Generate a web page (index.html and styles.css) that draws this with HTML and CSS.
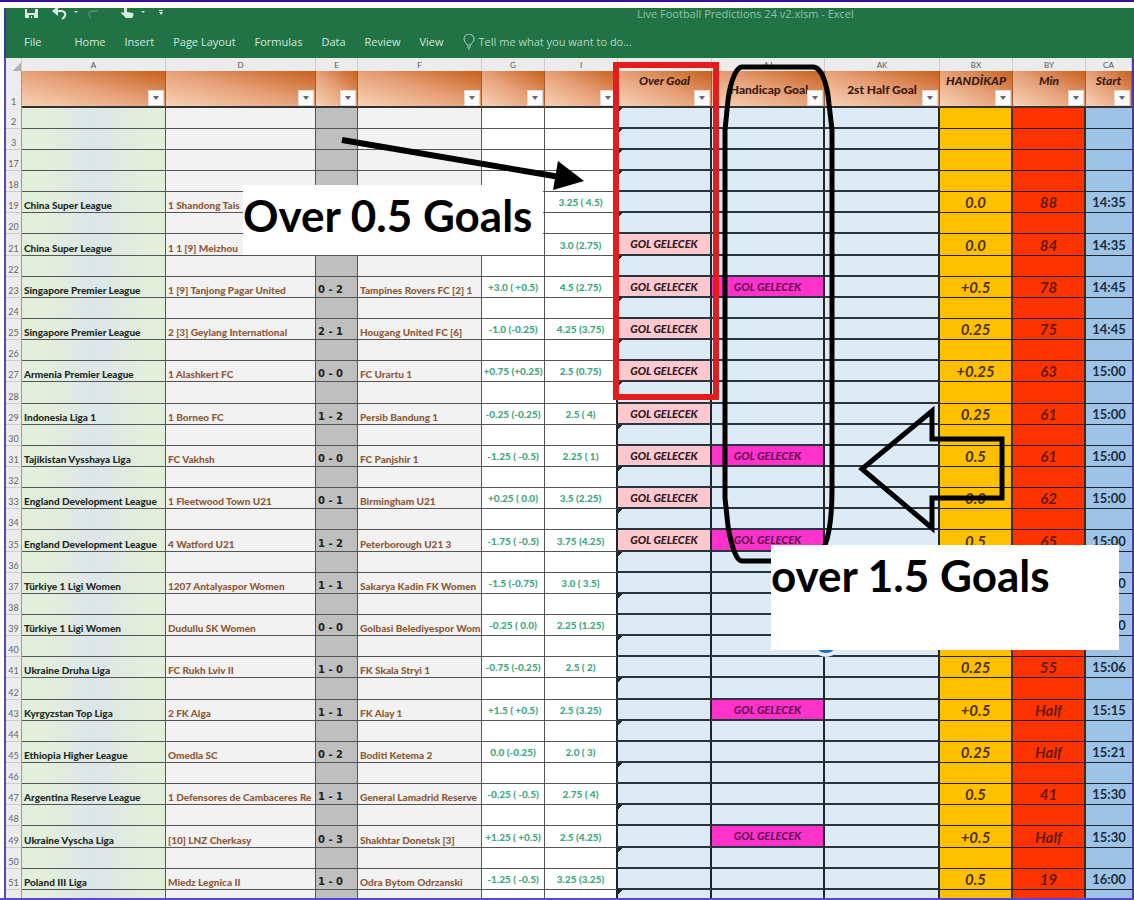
FILE: index.html
```
<!DOCTYPE html>
<html lang="en">

<head>
    <meta charset="UTF-8">
    <meta name="viewport" content="width=device-width, initial-scale=1.0">
    <title>Live Football Predictions</title>
    <link rel="stylesheet" href="styles.css">
</head>

<body>
    <div class="wrap">
        <header class="ribbon">
            <div class="titlebar">
                <svg class="quick" width="150" height="12" viewBox="0 0 150 12" aria-hidden="true">
                    <path class="fill" d="M1 1h2v4h8V1h3v9H1z" />
                    <path class="cut" d="M5 7h5v3H8V8H7v2H5z" />
                    <path class="line" d="M30 3h7c5 0 6 5 1 8" />
                    <path class="fill" d="M28 3l6-5v10z" />
                    <path class="fill" d="M50 3h4l-2 2zM117 3h4l-2 2zM135 2h4v1h-4zM135 4h4l-2 3z" />
                    <path class="line dim" d="M74 3h-5c-5 0-5 4-2 7" />
                    <path class="fill" d="M100 0h3v4l6 1c1 2 0 4-1 5h-6l-5-5 1-1 2 1z" />
                </svg>
                <span class="title">Live Football Predictions 24 v2.xlsm - Excel</span>
            </div>
            <nav class="tabs">
                <button class="file">File</button>
                <button>Home</button>
                <button>Insert</button>
                <button>Page Layout</button>
                <button>Formulas</button>
                <button>Data</button>
                <button>Review</button>
                <button>View</button>
                <button class="tell">
                    <svg width="12" height="16" viewBox="0 0 12 16" aria-hidden="true">
                        <path d="M4 11c0-2-3-3-3-6a5 5 0 0 1 10 0c0 3-3 4-3 6zM4 13h4M5 15h2" />
                    </svg>
                    Tell me what you want to do...
                </button>
            </nav>
        </header>

        <table>
            <colgroup>
                <col class="w-num">
                <col class="w-league">
                <col class="w-home">
                <col class="w-score">
                <col class="w-away">
                <col class="w-line">
                <col class="w-total">
                <col class="w-over">
                <col class="w-hgoal">
                <col class="w-half">
                <col class="w-odds">
                <col class="w-odds">
                <col class="w-start">
            </colgroup>
            <thead>
                <tr class="letters">
                    <td class="corner"></td>
                    <td>A</td>
                    <td>D</td>
                    <td>E</td>
                    <td>F</td>
                    <td>G</td>
                    <td>I</td>
                    <td>AI</td>
                    <td>AJ</td>
                    <td>AK</td>
                    <td>BX</td>
                    <td>BY</td>
                    <td>CA</td>
                </tr>
                <tr class="heads">
                    <td class="num">1</td>
                    <th><button class="filter" aria-label="Filter league"></button></th>
                    <th><button class="filter" aria-label="Filter home"></button></th>
                    <th><button class="filter" aria-label="Filter score"></button></th>
                    <th><button class="filter" aria-label="Filter away"></button></th>
                    <th><button class="filter" aria-label="Filter line"></button></th>
                    <th><button class="filter" aria-label="Filter total"></button></th>
                    <th class="slant">Over Goal<button class="filter" aria-label="Filter over goal"></button></th>
                    <th class="mid">Handicap Goal<button class="filter" aria-label="Filter handicap goal"></button></th>
                    <th class="mid">2st Half Goal<button class="filter" aria-label="Filter half goal"></button></th>
                    <th class="slant">HANDİKAP<button class="filter" aria-label="Filter handicap"></button></th>
                    <th class="slant">Min<button class="filter" aria-label="Filter minute"></button></th>
                    <th class="slant">Start<button class="filter" aria-label="Filter start"></button></th>
                </tr>
            </thead>
            <tbody id="list"></tbody>
        </table>

        <!-- marks drawn over the sheet -->
        <svg class="marks" width="1134" height="900" viewBox="0 0 1134 900" aria-hidden="true">
            <rect class="red" x="616" y="65" width="100" height="332" />
            <path class="black" d="M742 67H813C823 67 828 90 829 104L832 130V488C832 515 829 535 825 545C822 556 818 561 812 561H742C735 561 730 538 728 526L725 498V130L728 100C731 78 737 67 742 67Z" />
            <path class="black" d="M862 469L932 411V439H1002V498H932V528Z" />
            <path class="shaft" d="M342 140L560 177" />
            <path d="M558 161L584 181L553 190Z" />
            <circle class="halo" cx="826" cy="642" r="15" />
            <circle class="dot" cx="826" cy="642" r="11" />
        </svg>
        <div class="note note-one">Over 0.5 Goals</div>
        <div class="note note-two">over 1.5 Goals</div>
    </div>

    <script src="script.js"></script>
</body>

</html>
```
FILE: styles.css
```
* {
    box-sizing: border-box;
}

body {
    margin: 0;
    background: #fff;
    font-family: Lato, "Open Sans", sans-serif;
}

.wrap {
    position: relative;
    height: 100vh;
    overflow: hidden;
    padding: 6px 0 0 4px;
    border-top: 2px solid #3410a8;
    border-bottom: 2px solid #5a48d0;
}

.ribbon {
    height: 50px;
    border-left: 2px solid #3f3594;
    background: #217346;
    font-family: "Open Sans", "Noto Sans", sans-serif;
}

.titlebar {
    display: flex;
    height: 14px;
    padding-left: 18px;
}

.quick {
    flex: none;
}

.quick .fill {
    fill: #dcebe2;
}

.quick .cut {
    fill: #217346;
}

.quick .line {
    fill: none;
    stroke: #dcebe2;
    stroke-width: 2;
}

.quick .dim {
    stroke: #438a62;
}

.title {
    margin-left: 463px;
    font-size: 11px;
    line-height: 12px;
    color: #8fc3a5;
    white-space: nowrap;
}

.tabs {
    display: flex;
    align-items: center;
    gap: 19px;
    height: 40px;
    padding-left: 18px;
}

.tabs button {
    padding: 0;
    border: 0;
    background: none;
    font-family: inherit;
    font-size: 11px;
    line-height: 16px;
    color: #d5e8dc;
    white-space: nowrap;
}

.tabs .file {
    margin-right: 14px;
}

.tabs .tell {
    display: flex;
    align-items: center;
    gap: 4px;
    color: #b4d6c2;
}

.tell svg {
    fill: none;
    stroke: #b4d6c2;
}

/* sheet */
table {
    width: 100%;
    table-layout: fixed;
    border-spacing: 0;
    border-left: 2px solid #5a4aa8;
    border-right: 2px solid #4838a8;
}

.w-num { width: 16px; }
.w-league { width: 144px; }
.w-home { width: 150px; }
.w-score { width: 42px; }
.w-away { width: 124px; }
.w-line { width: 63px; }
.w-total { width: 73px; }
.w-over { width: 94px; }
.w-hgoal { width: 113px; }
.w-half { width: 115px; }
.w-odds { width: 73px; }
.w-start { width: 46px; }

td,
th {
    position: relative;
    padding: 0;
    overflow: hidden;
    white-space: nowrap;
}

.letters td {
    height: 13px;
    border-right: 1px solid #ccc;
    background: #ececec;
    font-size: 8px;
    line-height: 12px;
    text-align: center;
    color: #555;
}

.letters .corner {
    background: linear-gradient(135deg, #ececec 70%, #b0b0b0 70%);
}

.heads th {
    height: 37px;
    padding-top: 2px;
    border-right: 1px solid #a35a2c;
    border-bottom: 2px solid #333;
    background: linear-gradient(to top right, #f8d3b8 0%, #e6a077 50%, #c9601c 100%);
    font-size: 12px;
    font-weight: 900;
    line-height: 16px;
    vertical-align: top;
    color: #3a1a10;
}

.heads .slant {
    font-style: italic;
}

.heads .mid {
    padding: 11px 8px 0;
}

/* the label is wider than its cell once the button is placed */
.heads .mid:nth-child(9) {
    padding: 11px 0 0 2px;
}

.filter {
    position: absolute;
    right: 1px;
    bottom: 0;
    width: 16px;
    height: 16px;
    padding: 0;
    border: 1px solid #e0d8d4;
    background: #fafafa;
}

.filter::after {
    content: "";
    display: block;
    width: 0;
    margin: 0 auto;
    border: 3px solid transparent;
    border-top: 4px solid #667;
    border-bottom: 0;
}

.num {
    border-right: 1px solid #999;
    background: #ececec;
    font-size: 9px;
    line-height: 12px;
    text-align: center;
    vertical-align: bottom;
    color: #666;
}

tbody td {
    height: 21px;
    border-right: 1px solid #555;
    border-bottom: 1px solid #555;
    font-size: 10px;
    font-weight: 900;
    line-height: 14px;
}

tbody tr:nth-child(7n) td {
    height: 22px;
}

tbody .num {
    border-bottom-color: #ccc;
    font-weight: normal;
}

.league {
    padding-left: 2px;
    background: linear-gradient(90deg, #e2efda 15%, #dde6ea 50%, #e2efda 90%);
    vertical-align: bottom;
    color: #1f2a24;
}

.team {
    padding-left: 2px;
    background: #f2f2f2;
    vertical-align: bottom;
    color: #8e5a38;
}

.score {
    padding-left: 2px;
    background: #bfbfbf;
    font-family: "DejaVu Sans", sans-serif;
    vertical-align: bottom;
    color: #222;
}

.line {
    background: #fff;
    text-align: center;
    color: #3fa882;
}

tbody .line + .line,
tbody .goal {
    border-right: 2px solid #1c2730;
}

tbody .goal {
    border-bottom: 2px solid #2a343c;
    background: #ddebf7;
    font-size: 11px;
    font-style: italic;
    text-align: center;
    color: #2c1a24;
}

tbody .blank .line + .line + .goal {
    background: linear-gradient(135deg, #1c2730 3px, #ddebf7 3px);
}

tbody .goal.pink {
    background: #ffc7ce;
}

tbody .goal.magenta {
    background: #ff33cc;
    color: #6a0f58;
}

tbody .odds,
tbody .min,
tbody .start {
    border-right: 2px solid #402a20;
    border-bottom-color: #222;
    background: #ffc000;
    font-size: 15px;
    font-style: italic;
    font-weight: bold;
    text-align: center;
    color: #4a3208;
}

tbody .min {
    background: #ff3300;
    color: #641a0a;
}

tbody .start {
    border-right: 0;
    background: #9dc3e6;
    font-size: 13px;
    font-style: normal;
    color: #1c2c3c;
}

/* annotations */
.marks {
    position: absolute;
    top: -2px;
    left: 0;
}

.marks .red {
    fill: none;
    stroke: #e41c1c;
    stroke-width: 6;
}

.marks .black {
    fill: none;
    stroke: #000;
    stroke-width: 5;
}

.marks .shaft {
    stroke: #000;
    stroke-width: 6;
}

.marks .halo {
    fill: #e6ebf2;
}

.marks .dot {
    fill: #1670d8;
}

.note {
    position: absolute;
    padding: 6px 0;
    background: #fff;
    font-size: 44px;
    font-weight: bold;
    line-height: 48px;
    white-space: nowrap;
    color: #000;
}

.note-one {
    top: 183px;
    left: 243px;
    width: 300px;
    height: 70px;
}

.note-two {
    top: 543px;
    left: 771px;
    width: 348px;
    height: 105px;
}
```
FILE: script.js
```
// row, league, home, score, away, line, total, over, handicap goal, handicap, min, start
const matches = [
    [19, "China Super League", "1 Shandong Tais", "", "", "", "3.25 ( 4.5)", 0, 0, "0.0", "88", "14:35"],
    [21, "China Super League", "1 1 [9] Meizhou", "", "", "", "3.0 (2.75)", 1, 0, "0.0", "84", "14:35"],
    [23, "Singapore Premier League", "1 [9] Tanjong Pagar United", "0 - 2", "Tampines Rovers FC [2] 1", "+3.0 ( +0.5)", "4.5 (2.75)", 1, 1, "+0.5", "78", "14:45"],
    [25, "Singapore Premier League", "2 [3] Geylang International", "2 - 1", "Hougang United FC [6]", "-1.0 (-0.25)", "4.25 (3.75)", 1, 0, "0.25", "75", "14:45"],
    [27, "Armenia Premier League", "1 Alashkert FC", "0 - 0", "FC Urartu 1", "+0.75 (+0.25)", "2.5 (0.75)", 1, 0, "+0.25", "63", "15:00"],
    [29, "Indonesia Liga 1", "1 Borneo FC", "1 - 2", "Persib Bandung 1", "-0.25 (-0.25)", "2.5 ( 4)", 1, 0, "0.25", "61", "15:00"],
    [31, "Tajikistan Vysshaya Liga", "FC Vakhsh", "0 - 0", "FC Panjshir 1", "-1.25 ( -0.5)", "2.25 ( 1)", 1, 1, "0.5", "61", "15:00"],
    [33, "England Development League", "1 Fleetwood Town U21", "0 - 1", "Birmingham U21", "+0.25 ( 0.0)", "3.5 (2.25)", 1, 0, "0.0", "62", "15:00"],
    [35, "England Development League", "4 Watford U21", "1 - 2", "Peterborough U21 3", "-1.75 ( -0.5)", "3.75 (4.25)", 1, 1, "0.5", "65", "15:00"],
    [37, "Türkiye 1 Ligi Women", "1207 Antalyaspor Women", "1 - 1", "Sakarya Kadin FK Women", "-1.5 (-0.75)", "3.0 ( 3.5)", 0, 0, "", "", "15:00"],
    [39, "Türkiye 1 Ligi Women", "Dudullu SK Women", "0 - 0", "Golbasi Belediyespor Wom", "-0.25 ( 0.0)", "2.25 (1.25)", 0, 0, "", "", "15:00"],
    [41, "Ukraine Druha Liga", "FC Rukh Lviv II", "1 - 0", "FK Skala Stryi 1", "-0.75 (-0.25)", "2.5 ( 2)", 0, 0, "0.25", "55", "15:06"],
    [43, "Kyrgyzstan Top Liga", "2 FK Alga", "1 - 1", "FK Alay 1", "+1.5 ( +0.5)", "2.5 (3.25)", 0, 1, "+0.5", "Half", "15:15"],
    [45, "Ethiopia Higher League", "Omedla SC", "0 - 2", "Boditi Ketema 2", "0.0 (-0.25)", "2.0 ( 3)", 0, 0, "0.25", "Half", "15:21"],
    [47, "Argentina Reserve League", "1 Defensores de Cambaceres Re", "1 - 1", "General Lamadrid Reserve", "-0.25 ( -0.5)", "2.75 ( 4)", 0, 0, "0.5", "41", "15:30"],
    [49, "Ukraine Vyscha Liga", "[10] LNZ Cherkasy", "0 - 3", "Shakhtar Donetsk [3]", "+1.25 ( +0.5)", "2.5 (4.25)", 0, 1, "+0.5", "Half", "15:30"],
    [51, "Poland III Liga", "Miedz Legnica II", "1 - 0", "Odra Bytom Odrzanski", "-1.25 ( -0.5)", "3.25 (3.25)", 0, 0, "0.5", "19", "16:00"]
];

const columns = ["num", "league", "team", "score", "team", "line", "line", "goal", "goal", "goal", "odds", "min", "start"];

function addRow(values, blank) {
    const tr = document.createElement("tr");
    if (blank) tr.className = "blank";
    columns.forEach(function (name, i) {
        const td = document.createElement("td");
        td.className = name;
        td.textContent = values[i] || "";
        if (name === "goal" && values[i]) {
            td.classList.add(i === 7 ? "pink" : "magenta");
        }
        tr.appendChild(td);
    });
    document.querySelector("#list").appendChild(tr);
}

[2, 3, 17, 18].forEach(function (n) {
    addRow([n], true);
});

matches.forEach(function (m) {
    const row = m.slice(0, 7);
    row.push(m[7] ? "GOL GELECEK" : "", m[8] ? "GOL GELECEK" : "", "", m[9], m[10], m[11]);
    addRow(row, false);
    // the last blank row is cut by the window, without its number
    addRow([m[0] < 51 ? m[0] + 1 : ""], true);
});
```
